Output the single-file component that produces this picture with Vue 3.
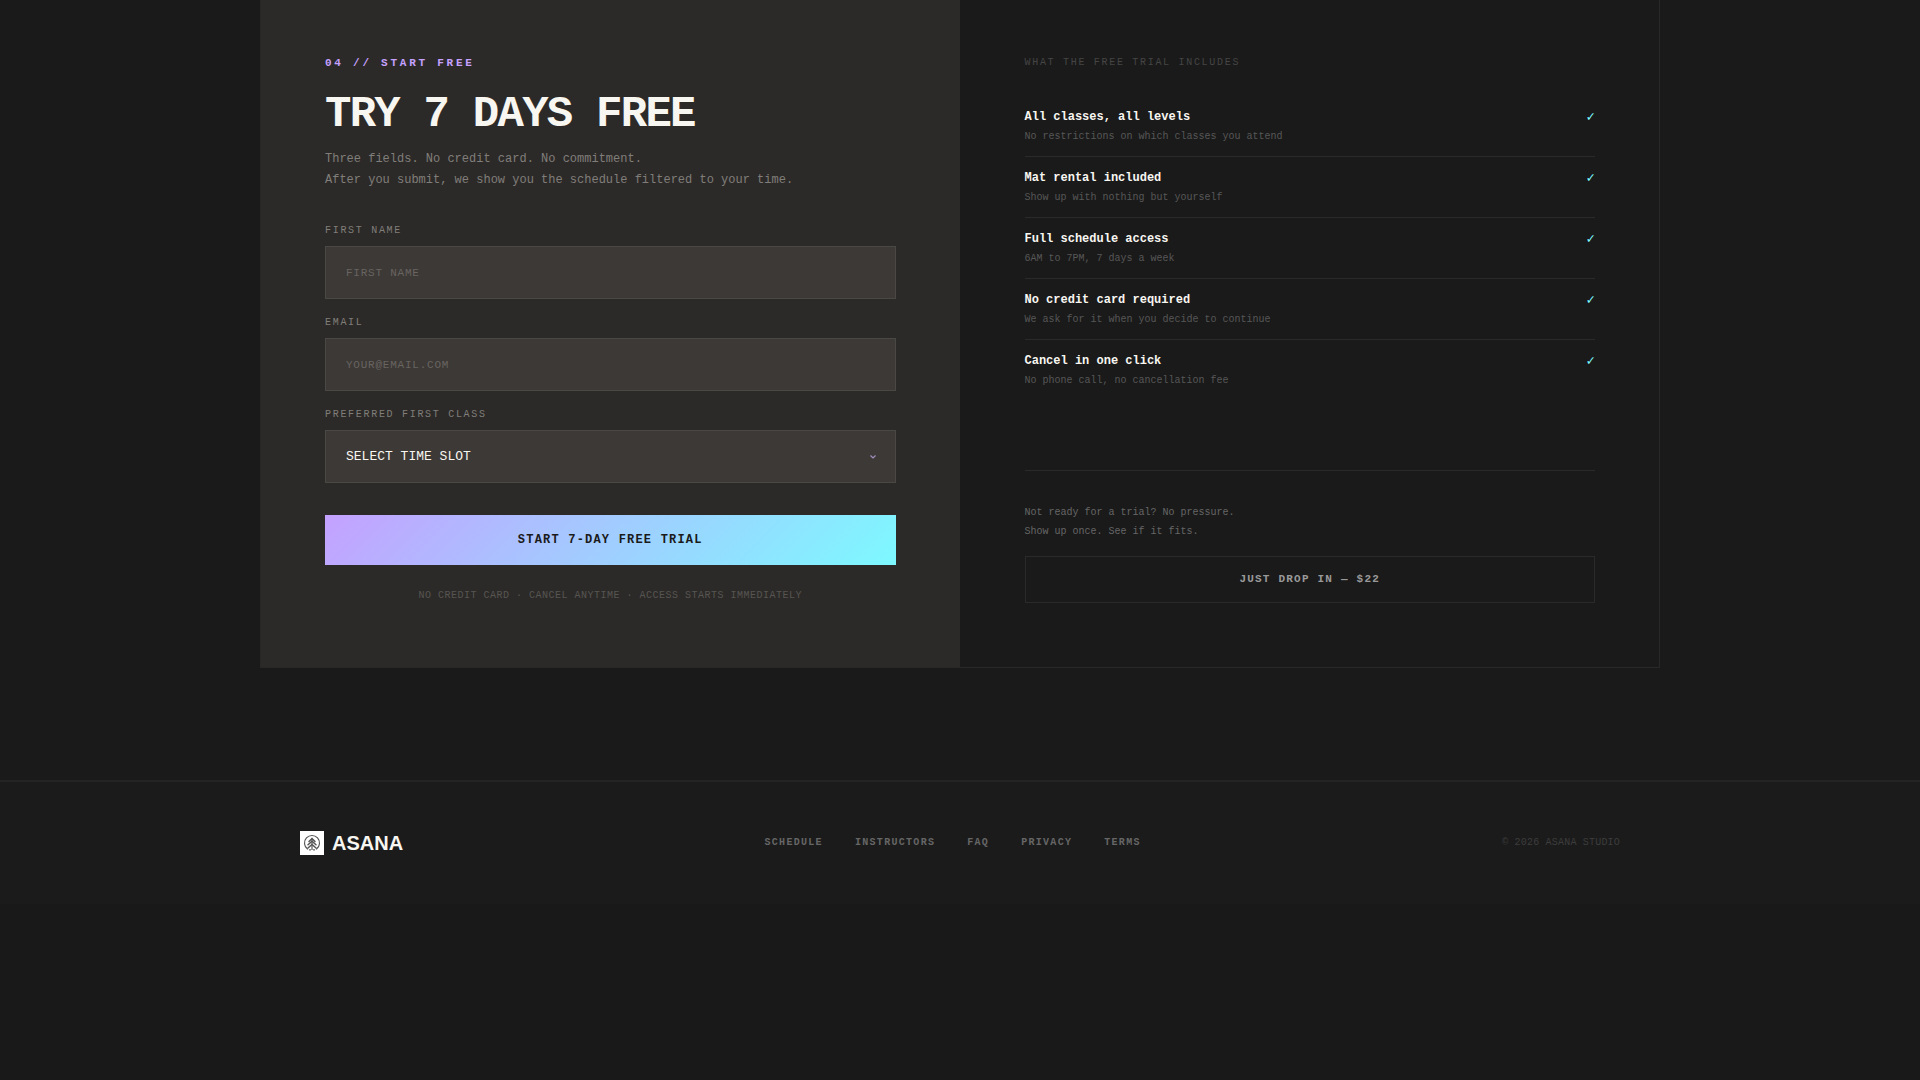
<script setup>
import { ref } from 'vue'

const firstName = ref('')
const email = ref('')
const slot = ref('')

const perks = [
  { title: 'All classes, all levels', note: 'No restrictions on which classes you attend' },
  { title: 'Mat rental included', note: 'Show up with nothing but yourself' },
  { title: 'Full schedule access', note: '6AM to 7PM, 7 days a week' },
  { title: 'No credit card required', note: 'We ask for it when you decide to continue' },
  { title: 'Cancel in one click', note: 'No phone call, no cancellation fee' },
]
const links = ['Schedule', 'Instructors', 'FAQ', 'Privacy', 'Terms']
</script>

<template>
  <main class="trial">
    <div class="card">
      <section class="signup">
        <p class="eyebrow">04 // START FREE</p>
        <h2>TRY 7 DAYS FREE</h2>
        <p class="intro">
          Three fields. No credit card. No commitment.<br />
          After you submit, we show you the schedule filtered to your time.
        </p>
        <form @submit.prevent>
          <div class="field">
            <label for="first-name">FIRST NAME</label>
            <input id="first-name" v-model="firstName" type="text" placeholder="FIRST NAME" />
          </div>
          <div class="field">
            <label for="email">EMAIL</label>
            <input id="email" v-model="email" type="email" placeholder="YOUR@EMAIL.COM" />
          </div>
          <div class="field">
            <label for="slot">PREFERRED FIRST CLASS</label>
            <div class="select-wrap">
              <select id="slot" v-model="slot">
                <option value="">SELECT TIME SLOT</option>
                <option value="morning">6AM</option>
                <option value="evening">7PM</option>
              </select>
              <svg class="chevron" viewBox="0 0 8 6" aria-hidden="true">
                <path d="M1.5 1.5 4 4 6.5 1.5" fill="none" stroke="#a08fbd" stroke-width="1.2" />
              </svg>
            </div>
          </div>
          <button class="submit" type="submit">START 7-DAY FREE TRIAL</button>
        </form>
        <p class="fine">NO CREDIT CARD · CANCEL ANYTIME · ACCESS STARTS IMMEDIATELY</p>
      </section>

      <section class="includes">
        <h3>WHAT THE FREE TRIAL INCLUDES</h3>
        <ul>
          <li v-for="perk in perks" :key="perk.title">
            <div>
              <p class="perk-title">{{ perk.title }}</p>
              <p class="perk-note">{{ perk.note }}</p>
            </div>
            <span class="check">✓</span>
          </li>
        </ul>
        <div class="dropin">
          <p>Not ready for a trial? No pressure.<br />Show up once. See if it fits.</p>
          <button type="button">JUST DROP IN — $22</button>
        </div>
      </section>
    </div>
  </main>

  <footer>
    <div class="footer-inner">
      <a class="brand" href="#">
        <svg viewBox="0 0 24 24" aria-hidden="true">
          <rect width="24" height="24" fill="#fff" />
          <g fill="none" stroke="#555" stroke-linecap="round">
            <path d="M7.5 18A7.5 7.5 0 1 1 16.5 18" stroke-width="1.2" />
            <path d="M9 10.5 12 7.5 15 10.5M8 13.8 12 10.3 16 13.8M8 17 12 13.5 16 17" stroke-width="1.5" />
            <path d="M12 7.5v11M9.5 18.8h1M13.5 18.8h1" stroke-width="1.2" />
          </g>
        </svg>
        <span>ASANA</span>
      </a>
      <nav>
        <a v-for="link in links" :key="link" href="#">{{ link }}</a>
      </nav>
      <p class="copyright">© 2026 ASANA STUDIO</p>
    </div>
  </footer>
</template>

<style>
body {
  margin: 0;
  background: #191919;
}
</style>

<style scoped>
* {
  box-sizing: border-box;
}
p,
h2,
h3,
ul {
  margin: 0;
  padding: 0;
}
.trial,
footer {
  font-family: "Liberation Mono", monospace;
  background: #1a1a1a;
}
.trial {
  padding: 0 32px 112px;
}
.card {
  display: grid;
  grid-template-columns: 1fr 1fr;
  gap: 1px;
  max-width: 1400px;
  margin: 0 auto;
  border: 1px solid #282828;
  border-top: 0;
  background: #1a1a1a;
}
.signup,
.includes {
  padding: 56px 64px 64px;
}
.signup {
  background: #2c2a28;
}
.eyebrow {
  color: #c4a1ff;
  font-size: 11px;
  line-height: 14px;
  font-weight: 700;
  letter-spacing: 0.25em;
}
h2 {
  margin-top: 22px;
  color: #f8f6f1;
  font-size: 44px;
  line-height: 44px;
  letter-spacing: -0.04em;
}
.intro {
  margin-top: 13px;
  color: #807e7a;
  font-size: 12px;
  line-height: 21px;
}
form {
  margin-top: 34px;
}
.field {
  margin-bottom: 18px;
}
label,
h3 {
  display: block;
  font-size: 10px;
  font-weight: 400;
  letter-spacing: 0.17em;
}
label {
  margin-bottom: 9px;
  color: #807e7a;
  line-height: 12px;
}
input,
select {
  display: block;
  width: 100%;
  height: 53px;
  padding: 0 20px;
  border: 1px solid #4a4845;
  border-radius: 0;
  outline: 0;
  background: #3d3936;
  color: #f8f6f1;
  font-family: inherit;
  font-size: 13px;
}
input::placeholder {
  color: #686461;
  font-size: 11px;
  letter-spacing: 0.07em;
  opacity: 1;
}
select {
  appearance: none;
}
.select-wrap {
  position: relative;
}
.chevron {
  position: absolute;
  right: 19px;
  top: 24px;
  width: 8px;
  height: 6px;
}
.submit {
  display: block;
  width: 100%;
  height: 50px;
  margin-top: 32px;
  border: 0;
  background: linear-gradient(135deg, #c4a1ff, #7df9ff);
  color: #1a1a1a;
  font: 700 12px "Liberation Mono", monospace;
  letter-spacing: 0.1em;
}
.fine {
  margin-top: 24px;
  color: #575552;
  font-size: 10px;
  line-height: 14px;
  letter-spacing: 0.05em;
  text-align: center;
}
.includes {
  display: flex;
  flex-direction: column;
}
h3 {
  color: #454545;
  line-height: 14px;
}
ul {
  margin-top: 26px;
  list-style: none;
}
li {
  display: flex;
  justify-content: space-between;
  align-items: flex-start;
  padding: 12px 0;
  border-bottom: 1px solid #2a2a2a;
}
li:last-child {
  border-bottom: 0;
}
.perk-title {
  color: #f8f6f1;
  font-size: 12px;
  line-height: 18px;
  font-weight: 700;
}
.perk-note {
  margin-top: 3px;
  color: #575757;
  font-size: 10px;
  line-height: 15px;
}
.check {
  color: #7df9ff;
  font-size: 14px;
  line-height: 18px;
  font-weight: 700;
}
.dropin {
  margin-top: auto;
  padding-top: 32px;
  border-top: 1px solid #2a2a2a;
}
.dropin p {
  color: #666;
  font-size: 10px;
  line-height: 19px;
}
.dropin button {
  display: block;
  width: 100%;
  height: 47px;
  margin-top: 15px;
  padding-bottom: 2px;
  border: 1px solid #2a2a2a;
  background: transparent;
  color: #999;
  font: 700 11px "Liberation Mono", monospace;
  letter-spacing: 0.11em;
}
footer {
  padding: 48px 32px;
  border-top: 2px solid #242424;
  background: #1b1b1b;
}
.footer-inner {
  display: flex;
  align-items: center;
  justify-content: space-between;
  max-width: 1320px;
  margin: 0 auto;
}
.brand {
  display: flex;
  align-items: center;
  gap: 8px;
  color: #f8f6f1;
  font: 700 20px/26px "Liberation Sans", Arial, sans-serif;
  text-decoration: none;
}
.brand svg {
  width: 24px;
  height: 24px;
}
nav {
  display: flex;
  gap: 32px;
}
nav a {
  color: #666;
  font-size: 10px;
  line-height: 12px;
  font-weight: 700;
  letter-spacing: 0.13em;
  text-decoration: none;
  text-transform: uppercase;
}
.copyright {
  color: #3d3d3d;
  font-size: 10px;
  line-height: 12px;
  letter-spacing: 0.02em;
}
</style>
